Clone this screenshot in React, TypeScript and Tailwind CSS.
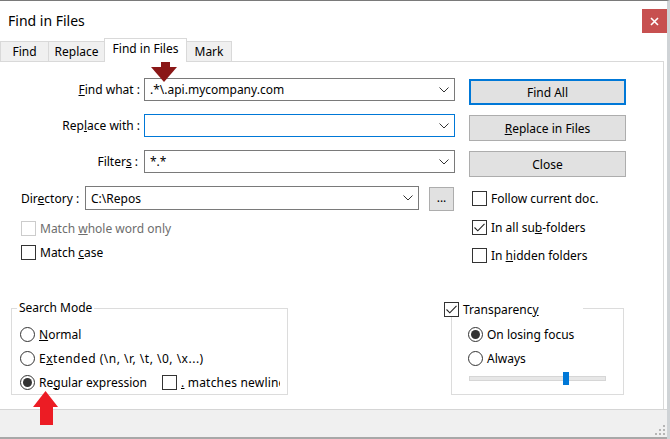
import React from 'react';

const font = "font-['Noto_Sans',sans-serif]";

function Chevron() {
  return (
    <svg width="10" height="6" viewBox="0 0 10 6" className="shrink-0">
      <polyline points="0.5,0.5 5,5 9.5,0.5" fill="none" stroke="#333" strokeWidth="1" />
    </svg>
  );
}

function CheckBox({ checked = false, disabled = false }: { checked?: boolean; disabled?: boolean }) {
  return (
    <span
      className={`w-[15px] h-[15px] shrink-0 bg-white border flex items-center justify-center ${
        disabled ? 'border-[#cccccc]' : 'border-[#333333]'
      }`}
    >
      {checked && (
        <svg width="11" height="9" viewBox="0 0 11 9">
          <polyline points="0.5,4.5 3.8,7.8 10.5,0.8" fill="none" stroke="#222" strokeWidth="1.1" />
        </svg>
      )}
    </span>
  );
}

function Radio({ checked = false }: { checked?: boolean }) {
  return (
    <span className="w-[15px] h-[15px] shrink-0 rounded-full border border-[#333333] bg-white flex items-center justify-center">
      {checked && <span className="w-[9px] h-[9px] rounded-full bg-[#333333]" />}
    </span>
  );
}

function Combo({ value, focused = false, width }: { value: string; focused?: boolean; width: string }) {
  return (
    <div
      className={`${width} h-full bg-white border flex items-center justify-between pl-[5px] pr-[5px] ${
        focused ? 'border-[#0078d7]' : 'border-[#7a7a7a]'
      }`}
    >
      <span className="pt-px">{value}</span>
      <Chevron />
    </div>
  );
}

function Button({ children, primary = false }: { children: React.ReactNode; primary?: boolean }) {
  return (
    <div
      className={`w-[157px] h-[26px] bg-[#e1e1e1] flex items-center justify-center pt-px ${
        primary ? 'border-2 border-[#0078d7]' : 'border border-[#adadad]'
      }`}
    >
      {children}
    </div>
  );
}

export default function App() {
  return (
    <div
      className={`${font} relative w-[670px] h-[439px] bg-white text-black text-[12px] leading-none flex flex-col overflow-hidden border-t border-t-[#7a7a7a] border-r-[3px] border-r-[#cfd3d6]`}
    >
      {/* Title bar */}
      <div className="h-[37px] shrink-0 flex items-start justify-between">
        <span className="mt-[12px] ml-[8px] text-[14px] leading-[16px]">Find in Files</span>
        <div className="mt-[8px] w-[25px] h-[24px] bg-[#c75050] flex items-center justify-center">
          <svg width="9" height="9" viewBox="0 0 9 9">
            <path d="M1 1 L8 8 M8 1 L1 8" stroke="#fff" strokeWidth="1.6" />
          </svg>
        </div>
      </div>

      {/* Tabs */}
      <div className="relative z-10 h-[24px] shrink-0 flex items-end">
        <div className="w-[48px] h-[21px] bg-[#f0f0f0] border-t border-l border-b border-[#d9d9d9] flex items-center justify-center pt-[1px]">
          Find
        </div>
        <div className="w-[56px] h-[21px] bg-[#f0f0f0] border-t border-l border-b border-[#d9d9d9] flex items-center justify-center pt-[1px]">
          Replace
        </div>
        <div className="w-[83px] h-[24px] bg-white border-t border-l border-r border-[#d9d9d9] flex items-start justify-center pt-[4px]">
          Find in Files
        </div>
        <div className="w-[45px] h-[21px] bg-[#f0f0f0] border-t border-r border-b border-[#d9d9d9] flex items-center justify-center pt-[1px]">
          Mark
        </div>
      </div>

      {/* Panel */}
      <div className="-mt-px w-[664px] h-[348px] shrink-0 border-t border-r border-[#d9d9d9] flex flex-col">
        <div className="h-[246px] shrink-0 flex items-start">
          {/* Left column */}
          <div className="w-[456px] flex flex-col">
            <div className="mt-[16px] h-[23px] flex items-center">
              <span className="w-[140px] text-right pt-px">
                <u>F</u>ind what :
              </span>
              <div className="ml-[4px] h-full">
                <Combo value=".*\.api.mycompany.com" width="w-[311px]" />
              </div>
            </div>
            <div className="mt-[13px] h-[23px] flex items-center">
              <span className="w-[140px] text-right pt-px">
                Rep<u>l</u>ace with :
              </span>
              <div className="ml-[4px] h-full">
                <Combo value="" focused width="w-[311px]" />
              </div>
            </div>
            <div className="mt-[13px] h-[23px] flex items-center">
              <span className="w-[140px] text-right pr-[2px] pt-px">
                Filter<u>s</u> :
              </span>
              <div className="ml-[4px] h-full">
                <Combo value="*.*" width="w-[311px]" />
              </div>
            </div>
            <div className="mt-[13px] h-[24px] flex items-center">
              <span className="ml-[21px] w-[64px] pt-px">
                Dir<u>e</u>ctory :
              </span>
              <div className="h-full">
                <Combo value="C:\Repos" width="w-[334px]" />
              </div>
              <div className="ml-[10px] w-[25px] h-[24px] mt-[2px] bg-[#e1e1e1] border border-[#adadad] flex items-center justify-center pb-[2px]">
                ...
              </div>
            </div>
            <div className="mt-[11px] ml-[21px] h-[15px] flex items-center gap-[4px] text-[#6d6d6d]">
              <CheckBox disabled />
              <span className="pt-px">
                Match <u>w</u>hole word only
              </span>
            </div>
            <div className="mt-[9px] ml-[21px] h-[15px] flex items-center gap-[4px]">
              <CheckBox />
              <span className="pt-px">
                Match <u>c</u>ase
              </span>
            </div>
          </div>

          {/* Right column */}
          <div className="ml-[13px] w-[157px] flex flex-col">
            <div className="mt-[17px]">
              <Button primary>Find All</Button>
            </div>
            <div className="mt-[10px]">
              <Button>
                <span>
                  <u>R</u>eplace in Files
                </span>
              </Button>
            </div>
            <div className="mt-[10px]">
              <Button>Close</Button>
            </div>
            <div className="mt-[14px] ml-[3px] h-[15px] flex items-center gap-[4px]">
              <CheckBox />
              <span className="pt-px">Follow current doc.</span>
            </div>
            <div className="mt-[14px] ml-[3px] h-[15px] flex items-center gap-[4px]">
              <CheckBox checked />
              <span className="pt-px">
                In all su<u>b</u>-folders
              </span>
            </div>
            <div className="mt-[13px] ml-[3px] h-[15px] flex items-center gap-[4px]">
              <CheckBox />
              <span className="pt-px">
                In <u>h</u>idden folders
              </span>
            </div>
          </div>
        </div>

        {/* Group boxes */}
        <div className="flex items-start">
          <div className="relative ml-[11px] w-[277px] h-[87px] border border-[#dcdcdc] pt-[13px] pl-[8px]">
            <span className="absolute left-[5px] top-[-9px] px-[2px] bg-white leading-[16px]">Search Mode</span>
            <div className="h-[24px] flex items-center gap-[4px]">
              <Radio />
              <span className="pt-px">
                <u>N</u>ormal
              </span>
            </div>
            <div className="h-[24px] flex items-center gap-[4px]">
              <Radio />
              <span className="pt-px tracking-[0.5px]">
                E<u>x</u>tended (\n, \r, \t, \0, \x...)
              </span>
            </div>
            <div className="h-[24px] w-[260px] overflow-hidden flex items-center whitespace-nowrap">
              <Radio checked />
              <span className="ml-[4px] w-[123px] shrink-0 pt-px">
                Re<u>g</u>ular expression
              </span>
              <CheckBox />
              <span className="ml-[4px] pt-px tracking-[0.2px]">
                <u>.</u> matches newline
              </span>
            </div>
          </div>

          <div className="relative ml-[163px] w-[173px] h-[87px] border border-[#dcdcdc] pt-[13px] pl-[16px]">
            <div className="absolute left-[-8px] top-[-7px] w-[139px] h-[15px] bg-white flex items-center gap-[4px]">
              <CheckBox checked />
              <span className="pt-px">
                Transparenc<u>y</u>
              </span>
            </div>
            <div className="h-[24px] flex items-center gap-[4px]">
              <Radio checked />
              <span className="pt-px">On losing focus</span>
            </div>
            <div className="h-[24px] flex items-center gap-[4px]">
              <Radio />
              <span className="pt-px">Always</span>
            </div>
            <div className="relative mt-[2px] ml-[1px] w-[137px] h-[13px]">
              <div className="absolute left-0 right-0 top-[4px] h-[5px] bg-[#e7e7e7] border border-[#d6d6d6]" />
              <div className="absolute left-[94px] top-0 w-[6px] h-[13px] bg-[#0078d7]" />
            </div>
          </div>
        </div>
      </div>

      {/* Status bar */}
      <div className="relative h-[30px] shrink-0 bg-[#f0f0f0] border-t border-t-[#d5d5d5] border-b-2 border-b-[#a8a8a8]">
        <svg className="absolute right-[1px] bottom-[1px]" width="12" height="12" viewBox="0 0 12 12">
          <g fill="#b5b5b5">
            <rect x="9" y="1" width="2" height="2" />
            <rect x="9" y="5" width="2" height="2" />
            <rect x="5" y="5" width="2" height="2" />
            <rect x="9" y="9" width="2" height="2" />
            <rect x="5" y="9" width="2" height="2" />
            <rect x="1" y="9" width="2" height="2" />
          </g>
        </svg>
      </div>

      {/* Annotation arrows */}
      <svg className="absolute left-[151px] top-[52px]" width="26" height="30" viewBox="0 0 26 30">
        <rect x="10" y="0" width="9" height="15" fill="#8a1717" />
        <polygon points="0,14 26,14 13,29" fill="#8a1717" />
      </svg>
      <svg className="absolute left-[33px] top-[390px]" width="26" height="35" viewBox="0 0 26 35">
        <polygon points="12.5,0 0,16 25,16" fill="#ec1c24" />
        <rect x="7" y="16" width="13" height="18" fill="#ec1c24" />
      </svg>
    </div>
  );
}
